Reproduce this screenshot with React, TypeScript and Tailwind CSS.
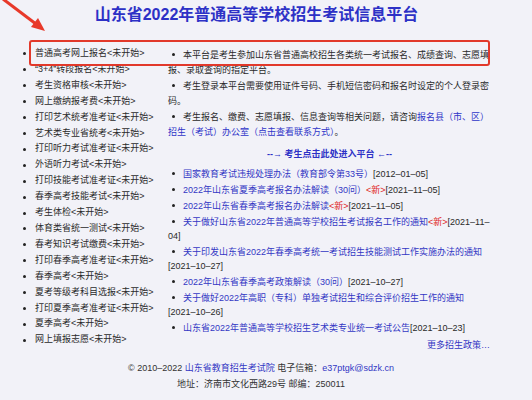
import React from 'react';

const steps = [
  '普通高考网上报名<未开始>',
  '“3+4”转段报名<未开始>',
  '考生资格审核<未开始>',
  '网上缴纳报考费<未开始>',
  '打印艺术统考准考证<未开始>',
  '艺术类专业省统考<未开始>',
  '打印听力考试准考证<未开始>',
  '外语听力考试<未开始>',
  '打印技能考试准考证<未开始>',
  '春季高考技能考试<未开始>',
  '考生体检<未开始>',
  '体育类省统一测试<未开始>',
  '春考知识考试缴费<未开始>',
  '打印春季高考准考证<未开始>',
  '春季高考<未开始>',
  '夏考等级考科目选报<未开始>',
  '打印夏季高考准考证<未开始>',
  '夏季高考<未开始>',
  '网上填报志愿<未开始>',
];

const news = [
  { title: '国家教育考试违规处理办法（教育部令第33号）', isNew: false, date: '[2012–01–05]' },
  { title: '2022年山东省夏季高考报名办法解读（30问）', isNew: true, date: '[2021–11–05]' },
  { title: '2022年山东省春季高考报名办法解读', isNew: true, date: '[2021–11–05]' },
  { title: '关于做好山东省2022年普通高等学校招生考试报名工作的通知', isNew: true, date: '[2021–11–04]' },
  { title: '关于印发山东省2022年春季高考统一考试招生技能测试工作实施办法的通知', isNew: false, date: '[2021–10–27]' },
  { title: '2022年山东省春季高考政策解读（30问）', isNew: false, date: '[2021–10–27]' },
  { title: '关于做好2022年高职（专科）单独考试招生和综合评价招生工作的通知', isNew: false, date: '[2021–10–26]' },
  { title: '山东省2022年普通高等学校招生艺术类专业统一考试公告', isNew: false, date: '[2021–10–23]' },
];

const Dot = () => (
  <span className="inline-block w-[3px] h-[3px] rounded-full bg-[#222] align-middle ml-[4px] mr-[8px] mb-[2px]"></span>
);

export default function App() {
  return (
    <div className="w-[532px] h-[400px] bg-[#f2f2f8] relative overflow-hidden font-['Liberation_Sans','Noto_Sans_CJK_SC',sans-serif] text-[#2a2a2a]">
      <h1 className="pt-[5px] pr-[19px] text-center text-[16px] leading-[20px] font-bold text-[#2d31c6]">
        山东省2022年普通高等学校招生考试信息平台
      </h1>

      <div className="flex mt-[21px]">
        <ul className="w-[145px] ml-[23px] text-[9px] leading-[15.9px]">
          {steps.map((s) => (
            <li key={s} className="flex items-center whitespace-nowrap">
              <span className="w-[3px] h-[3px] rounded-full bg-[#222] mr-[9px] shrink-0"></span>
              {s}
            </li>
          ))}
        </ul>

        <div className="w-[323px] text-[9px] leading-[15px] pt-[1.5px]">
          <p>
            <Dot />
            本平台是考生参加山东省普通高校招生各类统一考试报名、成绩查询、志愿填报、录取查询的指定平台。
          </p>
          <p className="mt-[1px]">
            <Dot />
            考生登录本平台需要使用证件号码、手机短信密码和报名时设定的个人登录密码。
          </p>
          <p className="mt-[1px]">
            <Dot />
            考生报名、缴费、志愿填报、信息查询等相关问题，请咨询
            <span className="text-[#2f35c8]">报名县（市、区）招生（考试）办公室（点击查看联系方式）</span>。
          </p>
          <p className="mt-[7px] text-center font-bold text-[#2d31c6]">--→ 考生点击此处进入平台 ←--</p>

          <ul className="mt-[5px] leading-[14px] flex flex-col gap-[2px]">
            {news.map((n) => (
              <li key={n.title}>
                <Dot />
                <span className="text-[#3337c4]">{n.title}</span>
                {n.isNew && <span className="text-[#e0221b]">&lt;新&gt;</span>}
                <span>{n.date}</span>
              </li>
            ))}
          </ul>
          <p className="mt-[3px] leading-[14px] text-right pr-[1px] text-[#3337c4]">更多招生政策…</p>
        </div>
      </div>

      <div className="mt-[8px] pl-[-2px] text-center text-[9px] leading-[16px] text-[#333] mr-[10px]">
        <p>
          © 2010–2022 <span className="text-[#3337c4]">山东省教育招生考试院</span> 电子信箱：
          <span className="text-[#3337c4]">e37ptgk@sdzk.cn</span>
        </p>
        <p>地址：济南市文化西路29号 邮编：250011</p>
      </div>

      <div className="absolute left-[29px] top-[40px] w-[461px] h-[26px] border-2 border-[#e2392b] rounded-[3px]"></div>

      <svg className="absolute left-0 top-0" width="50" height="36" viewBox="0 0 50 36">
        <line x1="3" y1="-1" x2="36" y2="24" stroke="#e8392a" strokeWidth="3" />
        <polygon points="45,31 31,27 38,18" fill="#e8392a" />
      </svg>
    </div>
  );
}
